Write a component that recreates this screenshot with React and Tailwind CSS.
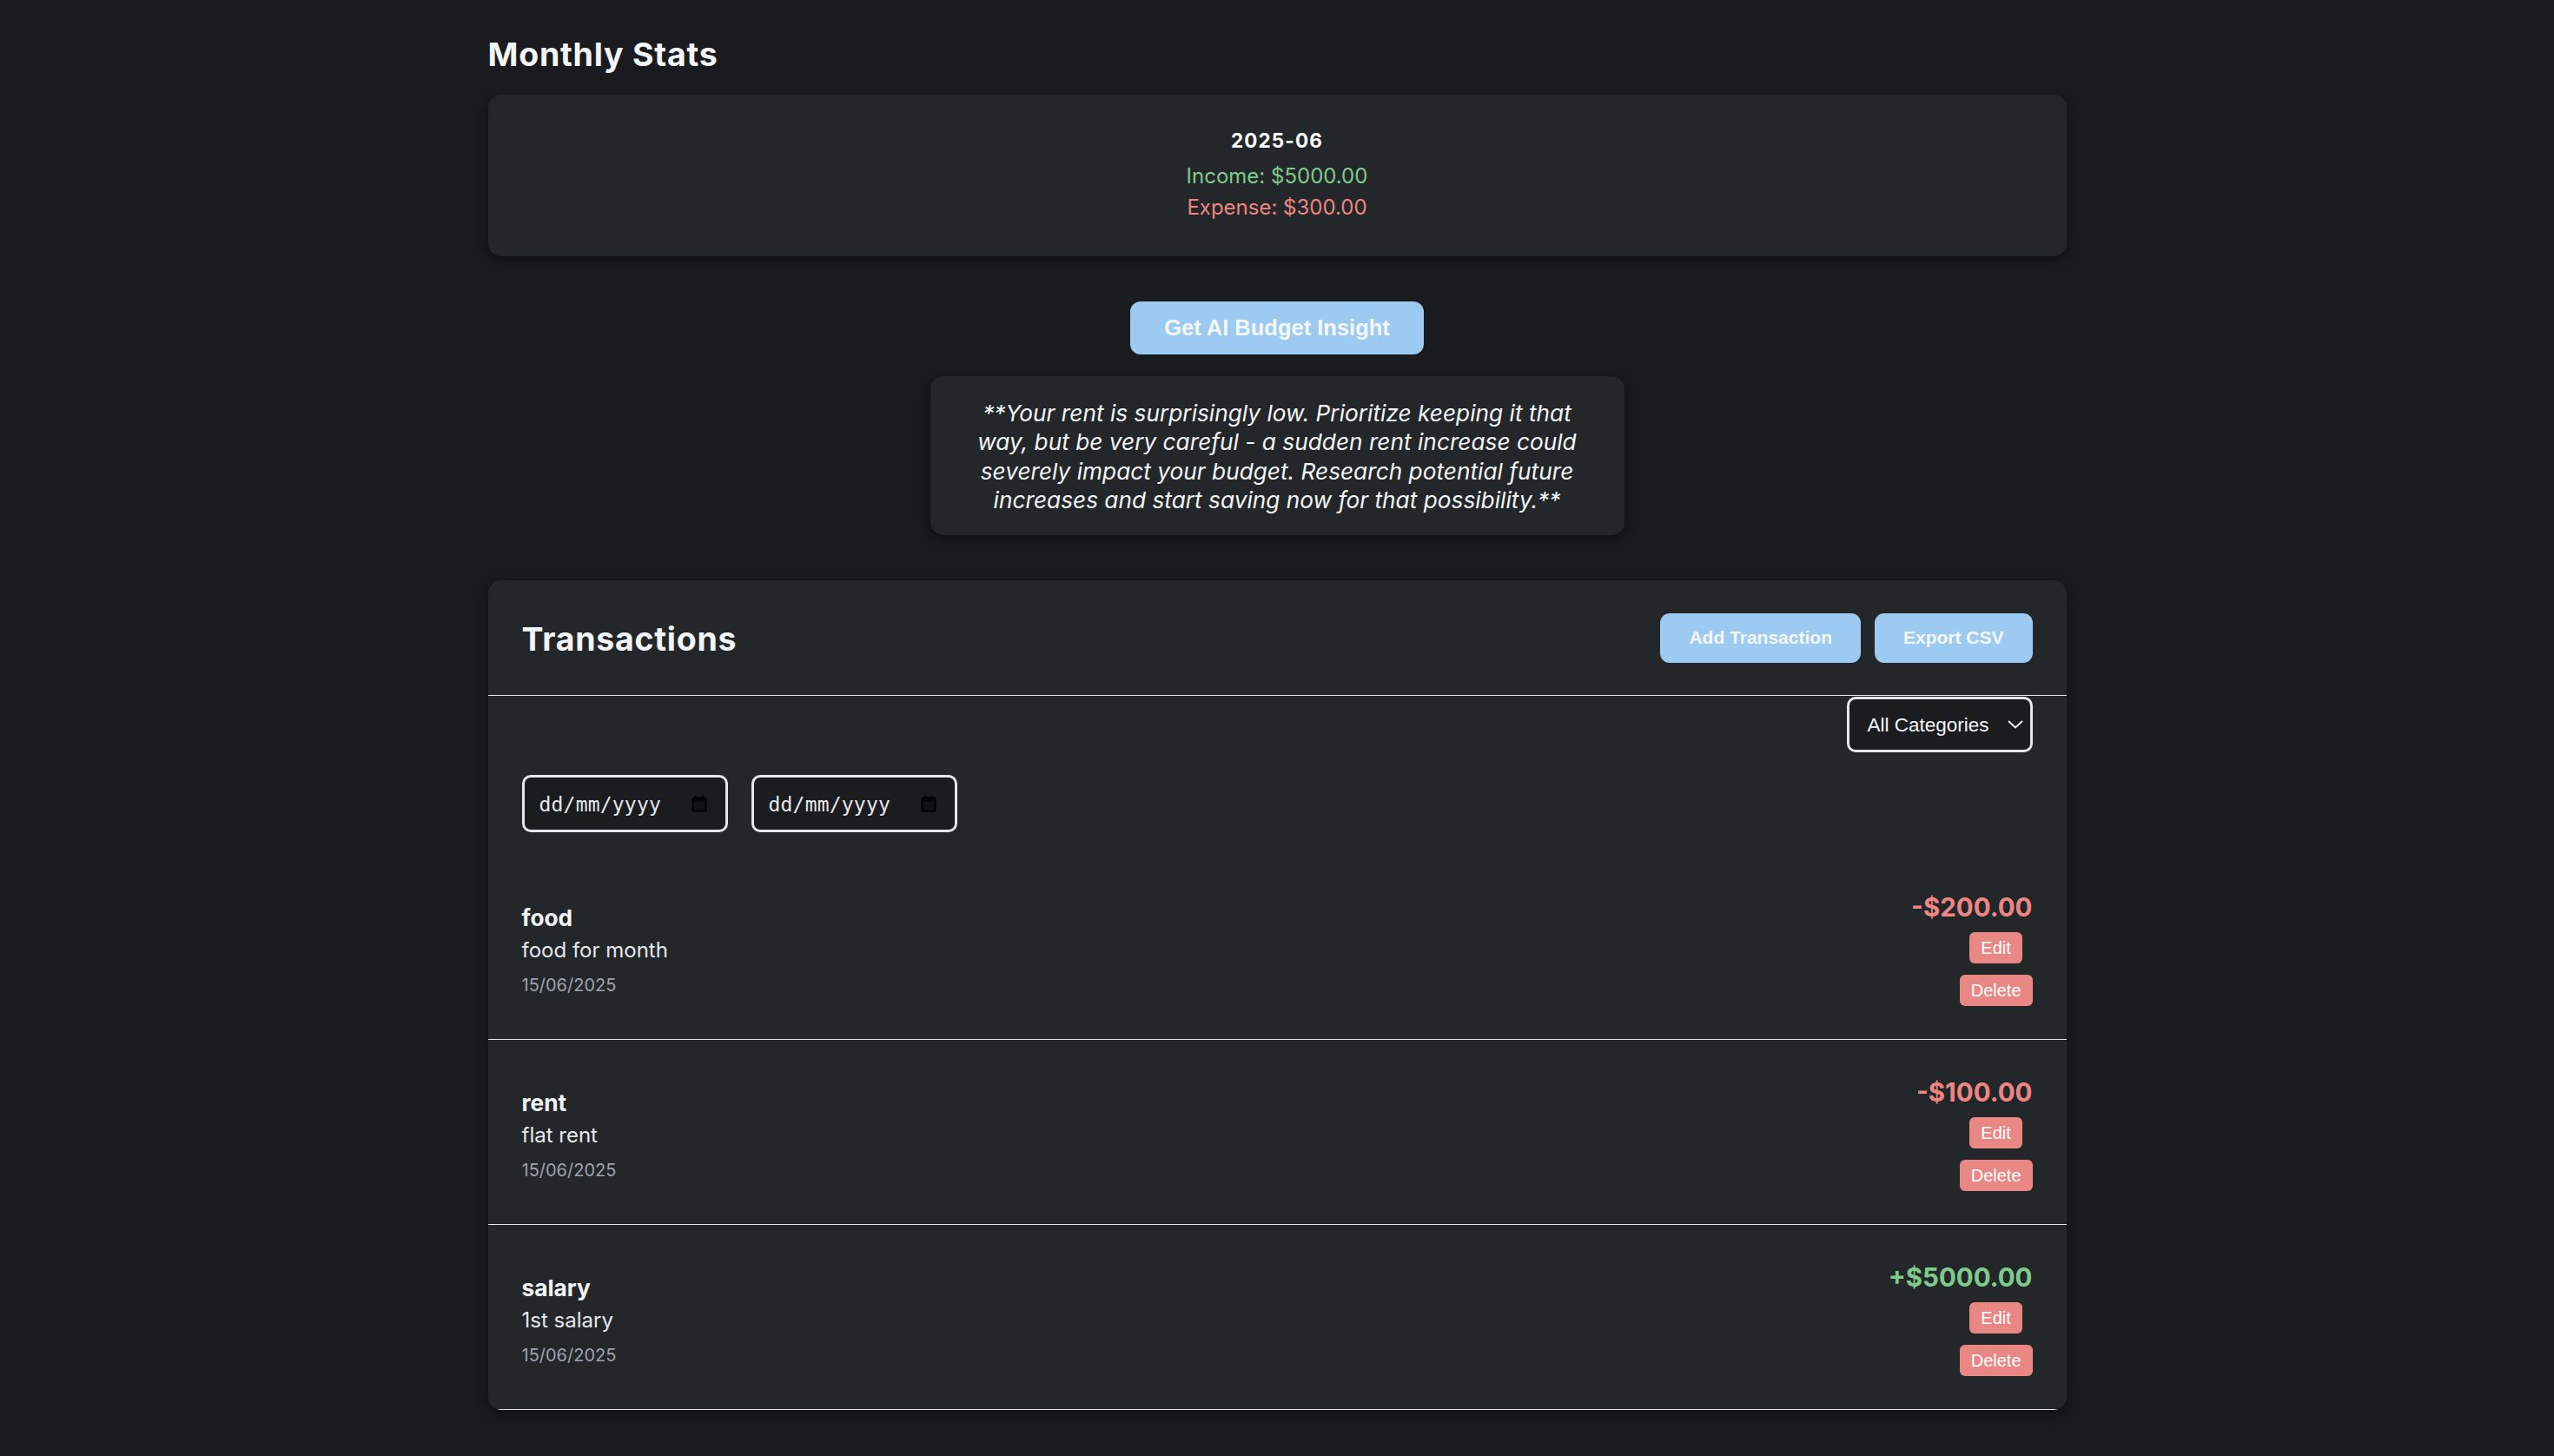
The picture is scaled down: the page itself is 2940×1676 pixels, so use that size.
import React from "react";

const transactions = [
  { title: "food", desc: "food for month", date: "15/06/2025", amount: "-$200.00", income: false },
  { title: "rent", desc: "flat rent", date: "15/06/2025", amount: "-$100.00", income: false },
  { title: "salary", desc: "1st salary", date: "15/06/2025", amount: "+$5000.00", income: true },
];

function CalendarIcon() {
  return (
    <svg width="18" height="20" viewBox="0 0 18 20" fill="none">
      <rect x="1.5" y="3.5" width="15" height="15" rx="2" stroke="#050505" strokeWidth="2.5" fill="#111213" />
      <rect x="1.5" y="3.5" width="15" height="4" fill="#050505" />
      <line x1="5" y1="0.5" x2="5" y2="4" stroke="#050505" strokeWidth="2.5" />
      <line x1="13" y1="0.5" x2="13" y2="4" stroke="#050505" strokeWidth="2.5" />
    </svg>
  );
}

function DateBox() {
  return (
    <div className="w-[237px] h-[66px] border-[3px] border-[#e5e7eb] rounded-[10px] bg-[#1b1c1e] flex items-center justify-between pl-[17px] pr-[21px]">
      <span className="font-['DejaVu_Sans_Mono',monospace] text-[23px] text-[#e5e7eb] tracking-[0.2px] pt-[2px]">dd/mm/yyyy</span>
      <CalendarIcon />
    </div>
  );
}

export default function App() {
  return (
    <div className="min-h-screen bg-[#1a1b1e] font-['Inter',sans-serif]">
      <div className="w-[1817px] mx-auto pt-[37px] pb-[40px]">
        <h2 className="text-[37.5px] leading-[52.5px] font-bold tracking-[0.75px] text-[#f3f4f6] mb-[19.5px]">Monthly Stats</h2>

        <div className="rounded-[15px] bg-[#23272a] shadow-[0_4px_14px_rgba(0,0,0,0.45)] pt-[37.5px] pb-[38.5px] text-center">
          <div className="text-[22.5px] leading-[30px] font-bold tracking-[0.05em] text-white mb-[8px]">2025-06</div>
          <div className="text-[24px] leading-[36px] text-[#7fcb8c]">Income: $5000.00</div>
          <div className="text-[24px] leading-[36px] text-[#ee8583]">Expense: $300.00</div>
        </div>

        <div className="mt-[52px] flex justify-center">
          <button className="h-[61px] px-[39px] rounded-[12px] bg-[#9ccaf0] text-[#f4f8fc] font-['Liberation_Sans',Arial,sans-serif] font-bold text-[25.5px]">
            Get AI Budget Insight
          </button>
        </div>

        <div className="mt-[25px] mx-auto w-[799px] rounded-[15px] bg-[#23272a] shadow-[0_4px_14px_rgba(0,0,0,0.45)] pt-[26px] pb-[24px] px-[42px] text-center italic text-[26.25px] leading-[33.3px] text-[#f3f4f6]">
          **Your rent is surprisingly low. Prioritize keeping it that way, but be very careful - a sudden rent increase could severely impact your budget. Research potential future increases and start saving now for that possibility.**
        </div>

        <div className="mt-[52px] rounded-[15px] overflow-hidden bg-[#23272a] shadow-[0_4px_14px_rgba(0,0,0,0.45)]">
          <div className="flex justify-between items-center px-[39px] py-[37.5px] border-b border-[#e5e7eb]">
            <h2 className="pt-[4px] text-[37.5px] leading-[52.5px] font-bold tracking-[0.75px] text-[#f3f4f6]">Transactions</h2>
            <div className="flex gap-[16px] font-['Liberation_Sans',Arial,sans-serif]">
              <button className="h-[57px] px-[33px] rounded-[11px] bg-[#9ccaf0] text-[#f4f8fc] font-bold text-[21px]">Add Transaction</button>
              <button className="h-[57px] px-[33px] rounded-[11px] bg-[#9ccaf0] text-[#f4f8fc] font-bold text-[21px]">Export CSV</button>
            </div>
          </div>

          <div className="px-[39px] pt-[1px] flex justify-end">
            <div className="w-[214px] h-[64px] border-[3px] border-[#e5e7eb] rounded-[10px] bg-[#1b1c1e] flex items-center justify-between pl-[21px] pr-[8px] font-['Liberation_Sans',Arial,sans-serif] text-[22.5px] text-[#f3f4f6]">
              <span className="pt-[1px]">All Categories</span>
              <svg width="18" height="10" viewBox="0 0 18 10" fill="none">
                <polyline points="1,1 9,8.5 17,1" stroke="#f3f4f6" strokeWidth="1.8" fill="none" />
              </svg>
            </div>
          </div>

          <div className="mt-[26px] px-[39px] flex gap-[27px]">
            <DateBox />
            <DateBox />
          </div>

          <div className="mt-[26px]">
            {transactions.map((t) => (
              <div key={t.title} className="flex justify-between items-center px-[39px] py-[38px] border-b border-[#e5e7eb]">
                <div className="pt-[6px]">
                  <div className="text-[26.25px] leading-[37.5px] font-bold text-[#f3f4f6]">{t.title}</div>
                  <div className="text-[24px] leading-[37.5px] text-[#e5e7eb]">{t.desc}</div>
                  <div className="mt-[6px] text-[20px] leading-[30px] text-[#9ca3af]">{t.date}</div>
                </div>
                <div className="flex flex-col items-end">
                  <div className={t.income ? "text-[29.5px] leading-[45px] font-bold text-[#7fcb8c]" : "text-[29.5px] leading-[45px] font-bold text-[#ee8583]"}>
                    {t.amount}
                  </div>
                  <div className="mt-[5.5px] flex flex-col items-center gap-[13.5px] font-['Liberation_Sans',Arial,sans-serif] text-[20px] text-white">
                    <button className="h-[36px] px-[13px] rounded-[6px] bg-[#e98784]">Edit</button>
                    <button className="h-[36px] px-[13px] rounded-[6px] bg-[#e98784]">Delete</button>
                  </div>
                </div>
              </div>
            ))}
          </div>
        </div>
      </div>
    </div>
  );
}
